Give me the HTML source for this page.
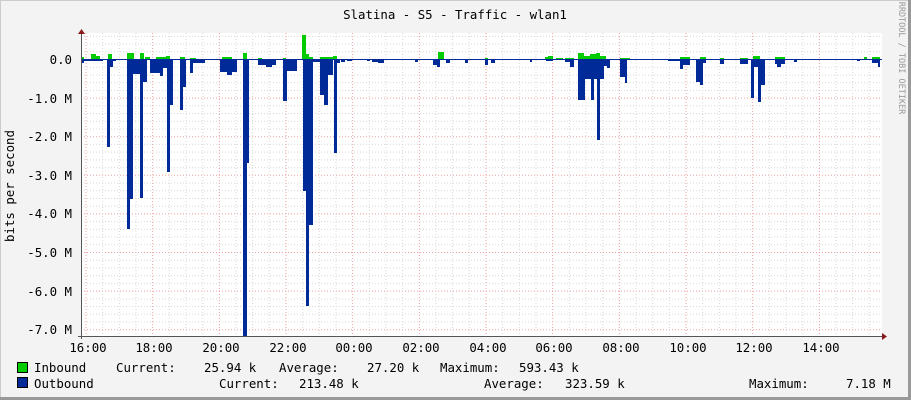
<!DOCTYPE html>
<html><head><meta charset="utf-8"><style>
html,body{margin:0;padding:0;}
body{width:911px;height:400px;overflow:hidden;background:#f3f3f3;}
svg{display:block;}
text{font-family:"DejaVu Sans Mono","Liberation Mono",monospace;font-size:12.4px;fill:#000;}
</style></head><body>
<svg width="911" height="400" viewBox="0 0 911 400" xmlns="http://www.w3.org/2000/svg">
<rect x="0" y="0" width="911" height="400" fill="#f3f3f3"/>
<line x1="0" y1="0.5" x2="911" y2="0.5" stroke="#ccc"/>
<line x1="0.5" y1="0" x2="0.5" y2="400" stroke="#ccc"/>
<line x1="909.5" y1="0" x2="909.5" y2="400" stroke="#999" stroke-width="3"/>
<line x1="0" y1="398.5" x2="911" y2="398.5" stroke="#999" stroke-width="3"/>
<rect x="81" y="33" width="801" height="303" fill="#fff"/>
<g id="grid"></g>
<g id="data"></g>
<line x1="81" y1="59.5" x2="882" y2="59.5" stroke="#002A97" stroke-width="1"/>
<line x1="81.5" y1="30" x2="81.5" y2="339" stroke="#555"/>
<line x1="78" y1="336.5" x2="884" y2="336.5" stroke="#555"/>
<polygon points="78,34 85,34 81.5,29" fill="#8b1a1a"/>
<polygon points="882,333 882,340 887,336.5" fill="#8b1a1a"/>
<text x="455" y="19" text-anchor="middle" font-size="13">Slatina - S5 - Traffic - wlan1</text>
<g text-anchor="end">
<text x="72" y="64">0.0</text>
<text x="72" y="103">-1.0 M</text>
<text x="72" y="141">-2.0 M</text>
<text x="72" y="180">-3.0 M</text>
<text x="72" y="218">-4.0 M</text>
<text x="72" y="257">-5.0 M</text>
<text x="72" y="296">-6.0 M</text>
<text x="72" y="334">-7.0 M</text>
</g>
<text transform="translate(14,186) rotate(-90)" text-anchor="middle">bits per second</text>
<text transform="translate(899,58) rotate(90)" text-anchor="middle" font-size="8.5" style="font-size:8.5px;fill:#999">RRDTOOL / TOBI OETIKER</text>
<g text-anchor="middle">
<text x="88" y="352">16:00</text>
<text x="154" y="352">18:00</text>
<text x="221" y="352">20:00</text>
<text x="288" y="352">22:00</text>
<text x="354" y="352">00:00</text>
<text x="421" y="352">02:00</text>
<text x="488" y="352">04:00</text>
<text x="554" y="352">06:00</text>
<text x="621" y="352">08:00</text>
<text x="688" y="352">10:00</text>
<text x="754" y="352">12:00</text>
<text x="821" y="352">14:00</text>
</g>
<rect x="17.5" y="362.5" width="10" height="10" fill="#00cc00" stroke="#000"/>
<rect x="17.5" y="377.5" width="10" height="10" fill="#002A97" stroke="#000"/>
<text x="34" y="372">Inbound</text>
<text x="116" y="372">Current:</text>
<text x="204" y="372">25.94 k</text>
<text x="279" y="372">Average:</text>
<text x="367" y="372">27.20 k</text>
<text x="440" y="372">Maximum:</text>
<text x="519" y="372">593.43 k</text>
<text x="34" y="388">Outbound</text>
<text x="219" y="388">Current:</text>
<text x="299" y="388">213.48 k</text>
<text x="484" y="388">Average:</text>
<text x="565" y="388">323.59 k</text>
<text x="749" y="388">Maximum:</text>
<text x="846" y="388">7.18 M</text>
</svg>
<script>
var NS="http://www.w3.org/2000/svg";
function el(p,n,a){var e=document.createElementNS(NS,n);for(var k in a)e.setAttribute(k,a[k]);p.appendChild(e);return e;}
var g=document.getElementById("grid");
for(var k=-3;k<=35;k++){var y=59.5+k*7.72;if(y<33||y>336)continue;var maj=(k%5===0);
el(g,"line",{x1:81,x2:882,y1:y,y2:y,stroke:maj?"#f0a0a0":"#d8d8d8","stroke-dasharray":"1,2"});}
for(var i=0;i<=48;i++){var x=86+i*16.667;if(x>882)break;var maj=(i%4===0);
el(g,"line",{x1:x,x2:x,y1:33,y2:336,stroke:maj?"#f0a0a0":"#d8d8d8","stroke-dasharray":"1,2"});}
var d=document.getElementById("data");
var blue=[[81,84,63],[84,103,61],[107,113,67],[107,110,147],[112,116,61],[127,130,229],[130,133,199],[133,140,74],[140,143,198],[143,147,82],[150,160,73],[160,163,76],[163,172,68],[167,170,172],[170,173,105],[180,183,110],[183,186,87],[190,193,73],[193,205,63],[220,237,72],[227,232,75],[243,247,336],[247,249,163],[258,276,65],[266,272,67],[283,287,101],[287,297,71],[303,307,191],[306,309,306],[309,313,225],[313,320,62],[320,324,95],[324,328,105],[328,333,75],[334,337,153],[337,340,63],[341,345,62],[347,352,61],[367,370,61],[372,383,62],[378,384,63],[415,418,62],[433,437,65],[437,440,67],[446,450,63],[465,468,63],[485,488,65],[491,495,63],[530,532,62],[546,553,61],[565,574,62],[570,574,67],[578,585,100],[582,585,94],[584,591,79],[591,594,100],[594,598,79],[597,600,140],[600,604,79],[604,609,66],[607,610,68],[620,625,77],[625,627,83],[668,680,61],[680,683,69],[683,690,65],[696,700,82],[700,703,85],[703,706,63],[720,724,64],[740,748,64],[751,754,98],[754,758,67],[758,761,102],[761,765,85],[775,785,64],[777,781,67],[794,797,62],[857,860,61],[872,879,63],[878,880,67]];
var green=[[81,84,57],[91,96,54],[96,100,56],[108,112,54],[127,134,53],[140,144,53],[145,150,57],[156,166,57],[166,170,56],[180,185,57],[190,196,58],[222,232,57],[243,247,53],[258,262,58],[283,286,58],[302,306,35],[306,309,54],[309,313,57],[320,335,57],[333,337,56],[438,444,52],[485,488,58],[545,548,57],[548,553,56],[556,563,58],[565,574,58],[578,584,53],[584,590,56],[590,596,54],[596,600,53],[600,606,56],[620,630,58],[680,690,57],[700,706,57],[720,724,58],[740,748,58],[753,760,56],[775,785,57],[864,867,57],[872,880,57]];
green.forEach(function(r){el(d,"rect",{x:r[0],y:r[2],width:r[1]-r[0],height:59.5-r[2],fill:"#00cc00"});});
blue.forEach(function(r){el(d,"rect",{x:r[0],y:59.5,width:r[1]-r[0],height:r[2]-59.5,fill:"#002A97"});});
</script>
</body></html>
